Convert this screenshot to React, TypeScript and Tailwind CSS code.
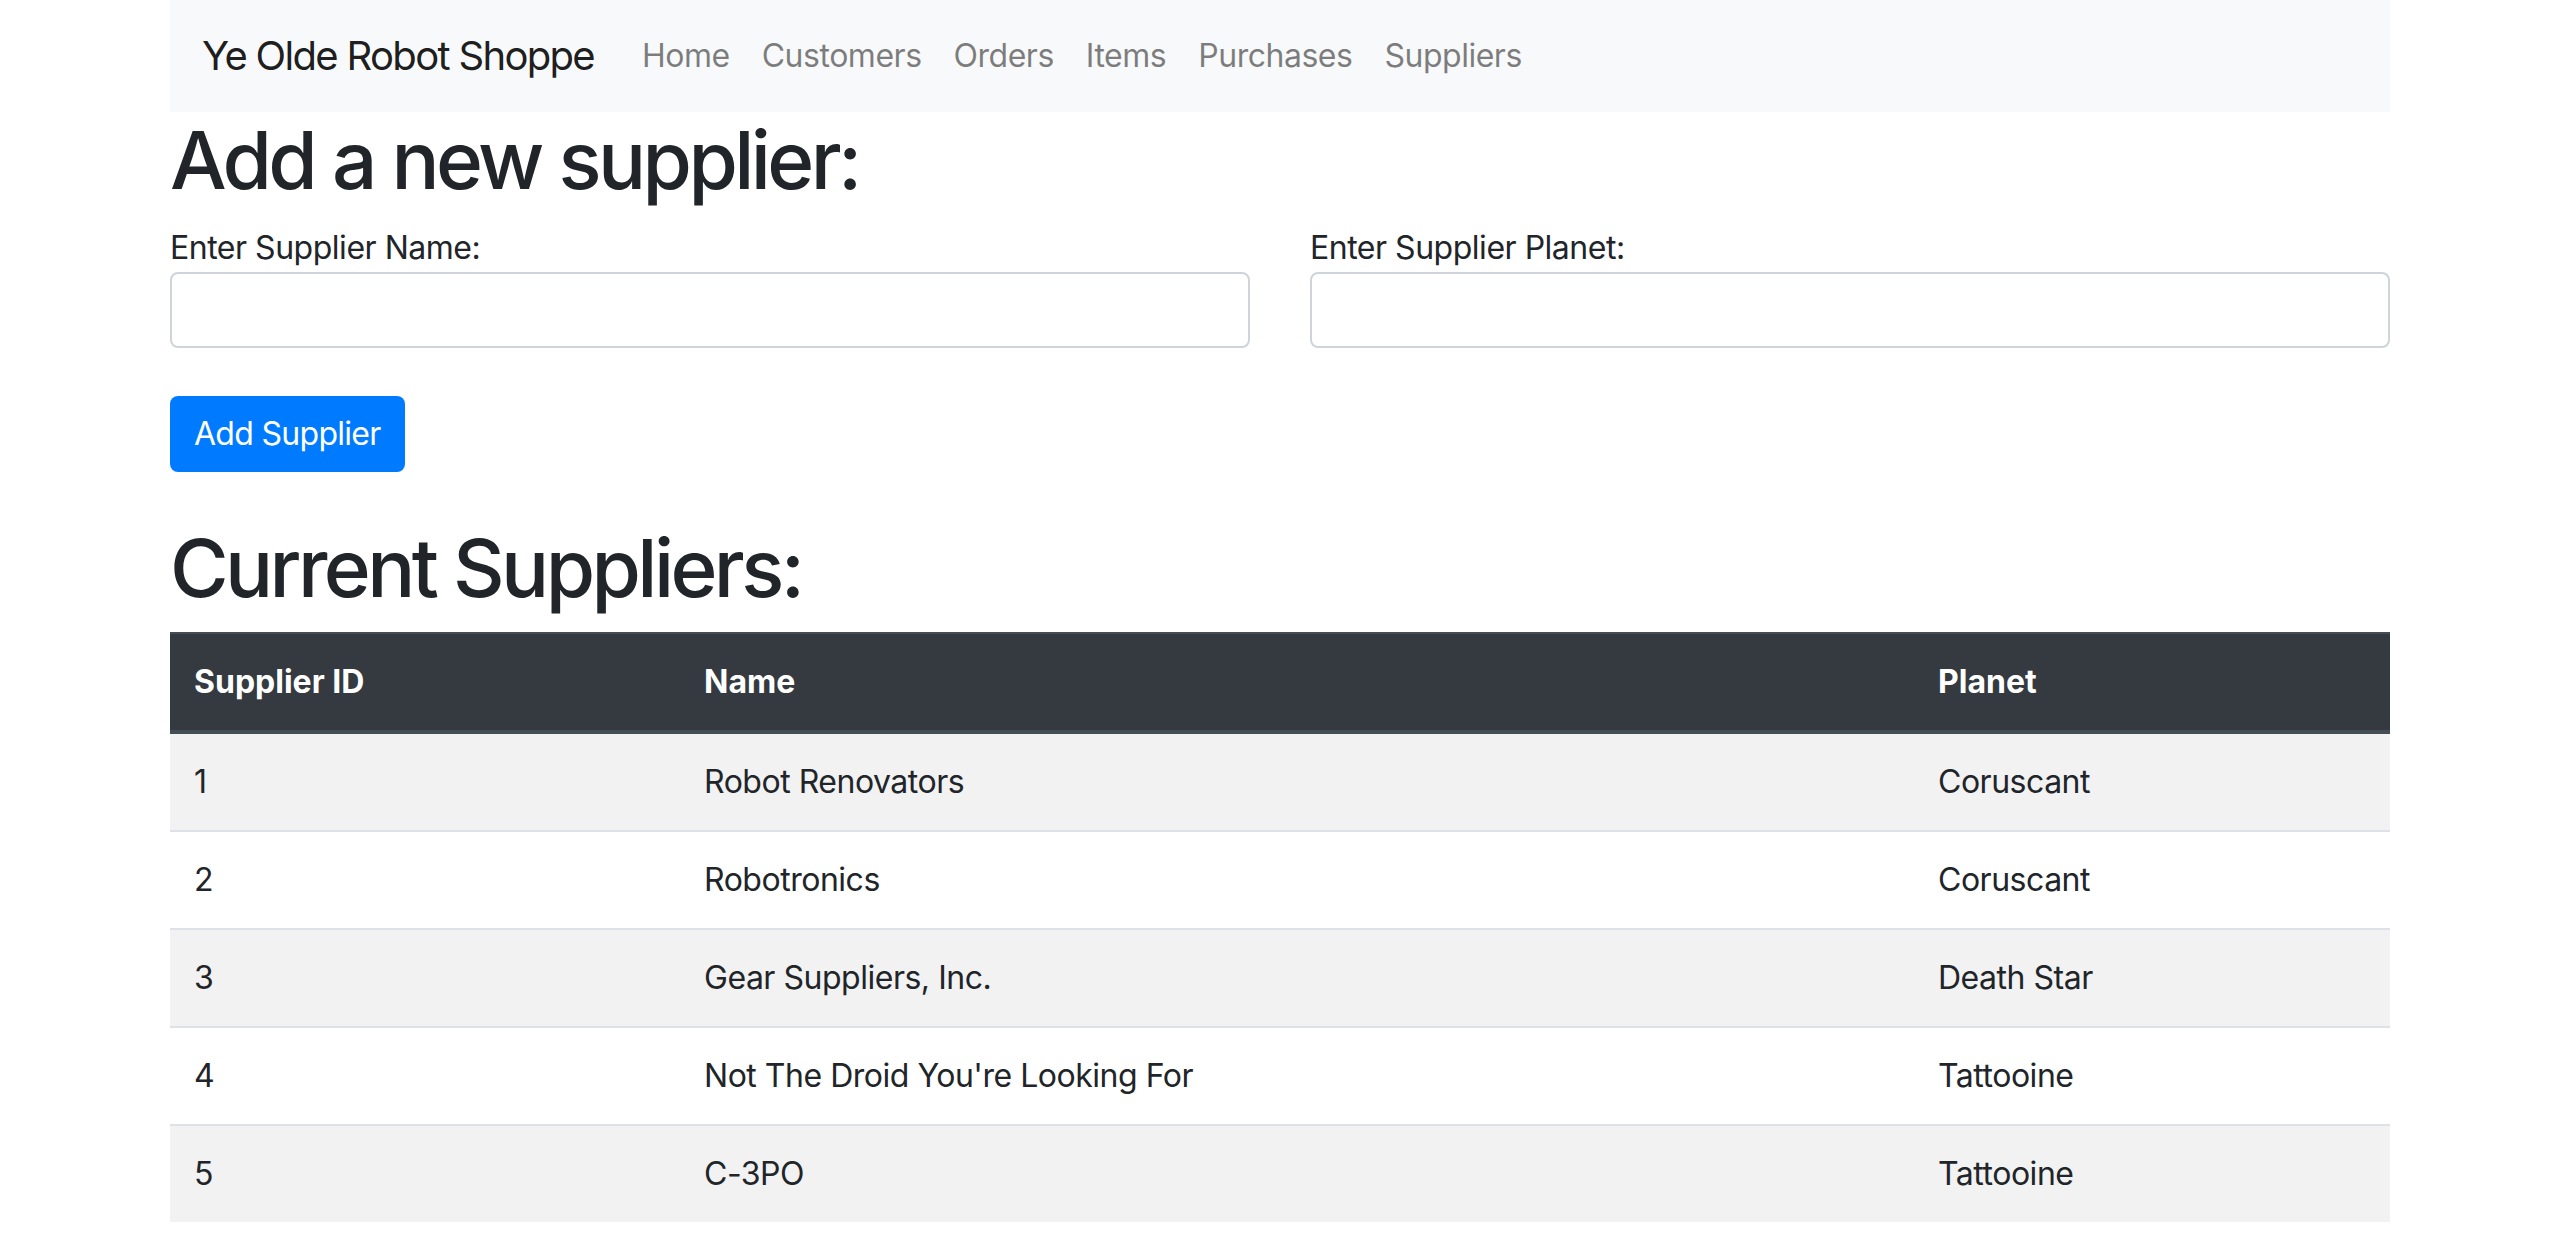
import React, { useState } from 'react';

interface Supplier {
  id: number;
  name: string;
  planet: string;
}

const suppliers: Supplier[] = [
  { id: 1, name: 'Robot Renovators', planet: 'Coruscant' },
  { id: 2, name: 'Robotronics', planet: 'Coruscant' },
  { id: 3, name: 'Gear Suppliers, Inc.', planet: 'Death Star' },
  { id: 4, name: "Not The Droid You're Looking For", planet: 'Tattooine' },
  { id: 5, name: 'C-3PO', planet: 'Tattooine' },
];

const navLinks = ['Home', 'Customers', 'Orders', 'Items', 'Purchases', 'Suppliers'];

export default function App() {
  const [name, setName] = useState('');
  const [planet, setPlanet] = useState('');

  return (
    <div className="min-h-screen bg-white text-[#212529] font-['Inter','Liberation_Sans',sans-serif] tracking-[-0.03em]">
      <div className="w-[2220px] mx-auto">
        <nav className="h-[112px] bg-[#f8f9fa] px-8 flex items-center">
          <span className="text-[40px] text-black/90 mr-8 tracking-[-0.042em]">Ye Olde Robot Shoppe</span>
          <ul className="flex">
            {navLinks.map((link) => (
              <li key={link}>
                <a href="#" className="px-4 text-[32px] text-black/50">
                  {link}
                </a>
              </li>
            ))}
          </ul>
        </nav>

        <h1 className="text-[80px] font-medium leading-[96px] mb-4 tracking-[-0.045em]">Add a new supplier:</h1>

        <form onSubmit={(e) => e.preventDefault()}>
          <div className="grid grid-cols-2 gap-[60px]">
            <div>
              <label className="block text-[32px] leading-[48px]">Enter Supplier Name:</label>
              <input
                type="text"
                value={name}
                onChange={(e) => setName(e.target.value)}
                className="block w-full h-[76px] border-2 border-[#ced4da] rounded-lg px-6 text-[32px] outline-none"
              />
            </div>
            <div>
              <label className="block text-[32px] leading-[48px]">Enter Supplier Planet:</label>
              <input
                type="text"
                value={planet}
                onChange={(e) => setPlanet(e.target.value)}
                className="block w-full h-[76px] border-2 border-[#ced4da] rounded-lg px-6 text-[32px] outline-none"
              />
            </div>
          </div>
          <button
            type="submit"
            className="mt-12 mb-12 h-[76px] px-6 bg-[#007bff] text-white text-[32px] rounded-lg tracking-[-0.022em]"
          >
            Add Supplier
          </button>
        </form>

        <h1 className="text-[80px] font-medium leading-[96px] mb-4 tracking-[-0.045em]">Current Suppliers:</h1>

        <table className="w-full border-collapse text-[32px] leading-[48px]">
          <thead>
            <tr className="bg-[#343a40] text-white tracking-normal">
              <th className="w-[510px] p-6 text-left font-bold border-t-2 border-b-4 border-[#454d55]">Supplier ID</th>
              <th className="w-[1234px] p-6 text-left font-bold border-t-2 border-b-4 border-[#454d55]">Name</th>
              <th className="w-[476px] p-6 text-left font-bold border-t-2 border-b-4 border-[#454d55]">Planet</th>
            </tr>
          </thead>
          <tbody>
            {suppliers.map((s, i) => (
              <tr key={s.id} className={i % 2 === 0 ? 'bg-[#f2f2f2]' : 'bg-white'}>
                <td className="p-6 border-t-2 border-[#dee2e6]">{s.id}</td>
                <td className="p-6 border-t-2 border-[#dee2e6]">{s.name}</td>
                <td className="p-6 border-t-2 border-[#dee2e6]">{s.planet}</td>
              </tr>
            ))}
          </tbody>
        </table>
      </div>
    </div>
  );
}
